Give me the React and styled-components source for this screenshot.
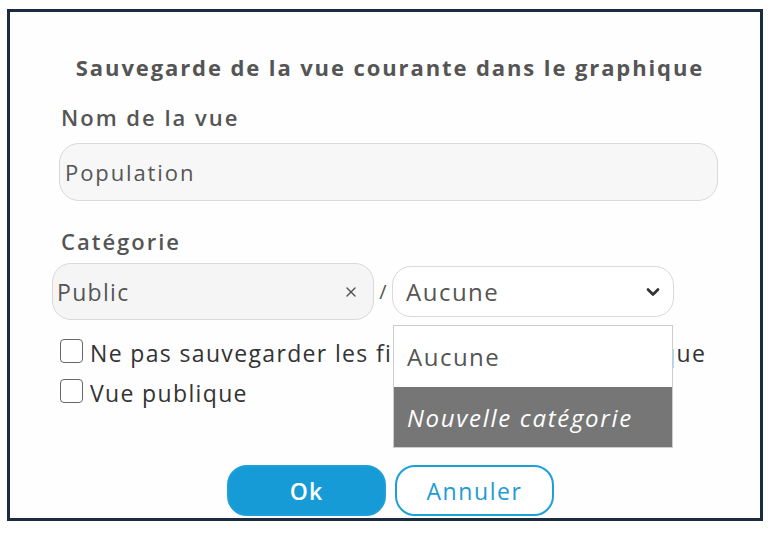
import React from 'react';
import styled, { createGlobalStyle } from 'styled-components';
import { ChevronDown, X } from 'lucide-react';

const GlobalStyle = createGlobalStyle`
  html, body {
    margin: 0;
    padding: 0;
    background: #ffffff;
  }
  body {
    font-family: "Open Sans", "Noto Sans", sans-serif;
    padding: 9px 0 0 7px;
  }
`;

// Cadre de la boîte de dialogue
const Frame = styled.div`
  box-sizing: border-box;
  width: 756px;
  height: 512px;
  border: 3px solid #1c2c40;
  background: #fefefe;
  display: flex;
  flex-direction: column;
`;

const Title = styled.h1`
  margin: 41px 0 0 10px;
  font-size: 22px;
  line-height: 28px;
  font-weight: 700;
  letter-spacing: 1.9px;
  color: #555555;
  text-align: center;
  white-space: nowrap;
`;

const Label = styled.div`
  margin: ${(p) => p.$top}px 0 0 51px;
  font-size: 22px;
  line-height: 28px;
  font-weight: 600;
  letter-spacing: 2px;
  color: #555555;
`;

const TextInput = styled.div`
  box-sizing: border-box;
  margin: 12px 0 0 49px;
  width: 659px;
  height: 58px;
  border: 1.5px solid #d9d9d9;
  border-radius: 20px;
  background: #f7f7f7;
  display: flex;
  align-items: center;
  padding-left: 5px;
  font-size: 22px;
  letter-spacing: 1.9px;
  color: #555555;
`;

const CategoryRow = styled.div`
  margin: 8px 0 0 42px;
  display: flex;
  align-items: center;
`;

const ClearableInput = styled.div`
  box-sizing: border-box;
  width: 322px;
  height: 57px;
  border: 1.5px solid #d9d9d9;
  border-radius: 19px;
  background: #f5f5f5;
  display: flex;
  align-items: center;
  justify-content: space-between;
  padding: 0 14px 0 4px;
  font-size: 23px;
  letter-spacing: 1.3px;
  color: #555555;
`;

const Slash = styled.span`
  width: 18px;
  text-align: center;
  font-size: 20px;
  color: #555555;
`;

const SelectWrap = styled.div`
  position: relative;
`;

const Select = styled.div`
  box-sizing: border-box;
  width: 282px;
  height: 51px;
  border: 1.5px solid #d9d9d9;
  border-radius: 19px;
  background: #ffffff;
  display: flex;
  align-items: center;
  justify-content: space-between;
  padding: 0 10px 0 13px;
  font-size: 24px;
  letter-spacing: 1.5px;
  color: #555555;
`;

// Liste déroulante ouverte, par-dessus le contenu
const Menu = styled.div`
  position: absolute;
  top: 59px;
  left: 1px;
  width: 280px;
  box-sizing: border-box;
  border: 1.5px solid #cccccc;
  background: #ffffff;
  z-index: 2;
`;

const Option = styled.div`
  height: ${(p) => (p.$active ? 60 : 61)}px;
  display: flex;
  align-items: center;
  padding-left: 13px;
  font-size: 24px;
  letter-spacing: ${(p) => (p.$active ? 1.7 : 1.5)}px;
  font-style: ${(p) => (p.$active ? 'italic' : 'normal')};
  color: ${(p) => (p.$active ? '#ffffff' : '#555555')};
  background: ${(p) => (p.$active ? '#767676' : '#ffffff')};
`;

const Checks = styled.div`
  margin: 13px 0 0 50px;
  display: flex;
  flex-direction: column;
`;

const CheckRow = styled.label`
  height: 40px;
  display: flex;
  align-items: center;
  gap: 7px;
  font-size: 23px;
  letter-spacing: 1.35px;
  color: #333333;
  white-space: nowrap;
`;

const Box = styled.span`
  box-sizing: border-box;
  flex: none;
  width: 23px;
  height: 24px;
  border: 1.5px solid #666666;
  border-radius: 4px;
  background: #ffffff;
  margin-top: -4px;
`;

const Buttons = styled.div`
  margin: 52px 0 0 217px;
  display: flex;
  gap: 9px;
`;

const Button = styled.button`
  box-sizing: border-box;
  width: 159px;
  height: 51px;
  border-radius: 20px;
  border: 2px solid #1e9fd8;
  background: ${(p) => (p.$primary ? '#169bd7' : '#ffffff')};
  color: ${(p) => (p.$primary ? '#ffffff' : '#1e9bd5')};
  font-family: "Open Sans", sans-serif;
  font-size: 23px;
  letter-spacing: ${(p) => (p.$primary ? 1.2 : 1.6)}px;
  font-weight: ${(p) => (p.$primary ? 600 : 400)};
  cursor: pointer;
`;

export default function App() {
  return (
    <>
      <GlobalStyle />
      <Frame>
        <Title>Sauvegarde de la vue courante dans le graphique</Title>
        <Label $top={22}>Nom de la vue</Label>
        <TextInput>Population</TextInput>
        <Label $top={26}>Catégorie</Label>
        <CategoryRow>
          <ClearableInput>
            <span>Public</span>
            <X size={16} strokeWidth={2} color="#555555" />
          </ClearableInput>
          <Slash>/</Slash>
          <SelectWrap>
            <Select>
              <span>Aucune</span>
              <ChevronDown size={20} strokeWidth={3.2} color="#333333" />
            </Select>
            <Menu>
              <Option>Aucune</Option>
              <Option $active>Nouvelle catégorie</Option>
            </Menu>
          </SelectWrap>
        </CategoryRow>
        <Checks>
          <CheckRow>
            <Box />
            Ne pas sauvegarder les filtres actuels du graphique
          </CheckRow>
          <CheckRow>
            <Box />
            Vue publique
          </CheckRow>
        </Checks>
        <Buttons>
          <Button $primary>Ok</Button>
          <Button>Annuler</Button>
        </Buttons>
      </Frame>
    </>
  );
}
